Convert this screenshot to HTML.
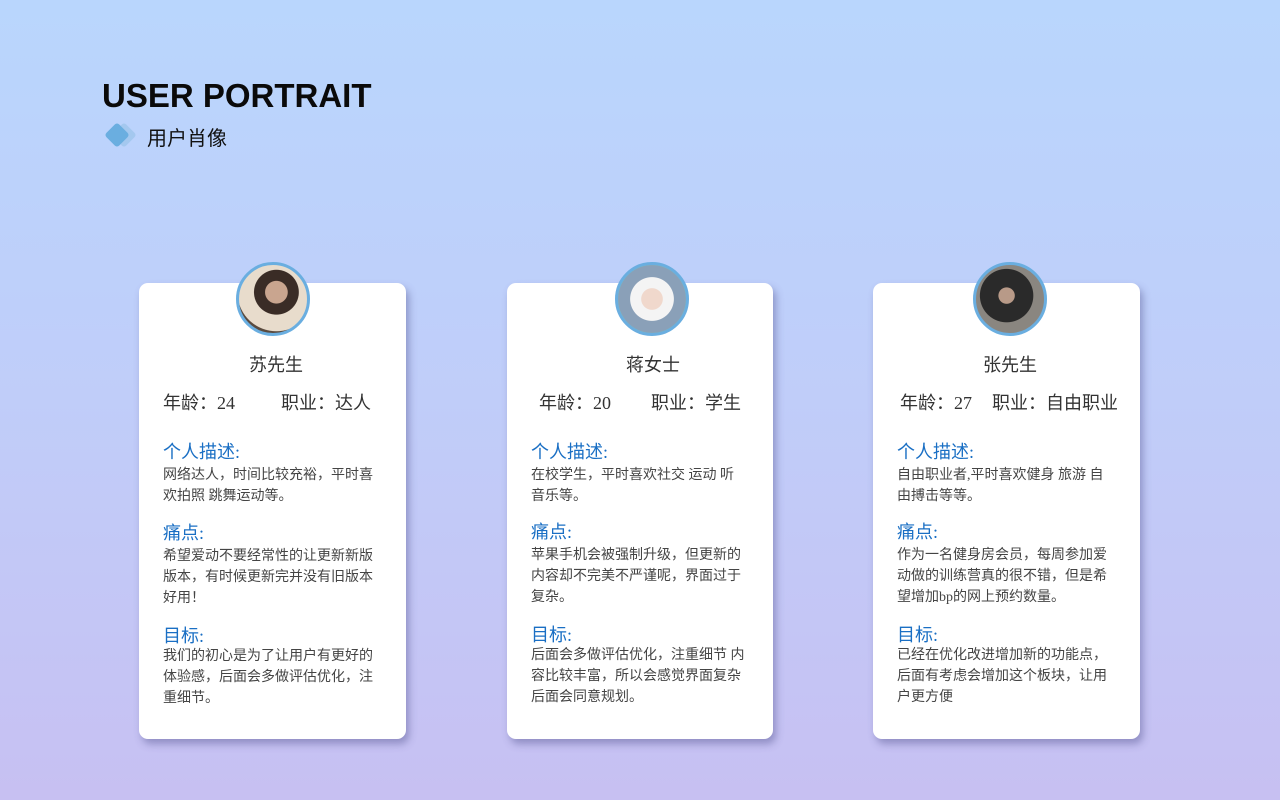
<!DOCTYPE html>
<html><head><meta charset="utf-8"><style>
*{margin:0;padding:0;box-sizing:border-box}
body{width:1280px;height:800px;overflow:hidden;background:linear-gradient(180deg,#b9d6fd 0%,#c0cdf9 50%,#c7c0f2 100%);font-family:"Liberation Serif","Noto Sans CJK SC",sans-serif;position:relative;color:#333}
.t{position:absolute;left:102px;top:77px;font:bold 33px "Liberation Sans",sans-serif;color:#0a0a0a}
.st{position:absolute;left:147px;top:122px;font:20px "Liberation Sans","Noto Sans CJK SC",sans-serif;color:#111}
.d1,.d2{position:absolute;width:18px;height:18px;transform:rotate(45deg);border-radius:3px}
.d1{left:115px;top:126px;background:#a4c8ef}
.d2{left:108px;top:126px;background:#6aaee0}
.card{position:absolute;top:283px;width:267px;height:456px;background:#fff;border-radius:9px;box-shadow:3px 5px 8px rgba(80,80,140,.45)}
.av{position:absolute;top:-21px;width:74px;height:74px;border-radius:50%;border:3px solid #6aaee0;overflow:hidden}
.nm{position:absolute;top:68px;width:100px;text-align:center;font-size:18px;color:#333}
.ag{position:absolute;top:106px;left:24px;right:20px;font-size:18px;color:#333;white-space:nowrap}
.h{position:absolute;left:24px;font-size:18px;color:#1a6fc4}
.p{position:absolute;left:24px;right:10px;font-size:14px;line-height:21px;color:#444;white-space:nowrap}
</style></head><body>
<div class="t">USER PORTRAIT</div>
<div class="d1"></div><div class="d2"></div>
<div class="st">用户肖像</div>

<div class="card" style="left:139px">
<div class="av" style="left:97px;background:radial-gradient(circle at 55% 40%,#c9a58f 0 20%,#3a2c26 21% 40%,#e8dccc 41% 70%,#5a4a3e 71%)"></div>
<div class="nm" style="left:87px">苏先生</div>
<div class="ag">年龄：24<span style="display:inline-block;width:46px"></span>职业：达人</div>
<div class="h" style="top:155px">个人描述:</div>
<div class="p" style="top:182px">网络达人，时间比较充裕，平时喜<br>欢拍照 跳舞运动等。</div>
<div class="h" style="top:236px">痛点:</div>
<div class="p" style="top:263px">希望爱动不要经常性的让更新新版<br>版本，有时候更新完并没有旧版本<br>好用！</div>
<div class="h" style="top:339px">目标:</div>
<div class="p" style="top:363px">我们的初心是为了让用户有更好的<br>体验感，后面会多做评估优化，注<br>重细节。</div>
</div>

<div class="card" style="left:507px;width:266px">
<div class="av" style="left:108px;background:radial-gradient(circle at 50% 50%,#f0d8cc 0 22%,#f4f4f4 23% 45%,#8aa0b8 46% 70%,#7ec8b0 71%)"></div>
<div class="nm" style="left:96px">蒋女士</div>
<div class="ag" style="left:32px">年龄：20<span style="display:inline-block;width:40px"></span>职业：学生</div>
<div class="h" style="top:155px">个人描述:</div>
<div class="p" style="top:182px">在校学生，平时喜欢社交 运动 听<br>音乐等。</div>
<div class="h" style="top:235px">痛点:</div>
<div class="p" style="top:262px">苹果手机会被强制升级，但更新的<br>内容却不完美不严谨呢，界面过于<br>复杂。</div>
<div class="h" style="top:338px">目标:</div>
<div class="p" style="top:362px">后面会多做评估优化，注重细节 内<br>容比较丰富，所以会感觉界面复杂<br>后面会同意规划。</div>
</div>

<div class="card" style="left:873px">
<div class="av" style="left:100px;background:radial-gradient(circle at 45% 45%,#b89a88 0 15%,#2a2a2a 16% 50%,#8a8680 51%)"></div>
<div class="nm" style="left:87px">张先生</div>
<div class="ag" style="left:27px">年龄：27<span style="display:inline-block;width:20px"></span>职业：自由职业</div>
<div class="h" style="top:155px">个人描述:</div>
<div class="p" style="top:182px">自由职业者,平时喜欢健身 旅游 自<br>由搏击等等。</div>
<div class="h" style="top:235px">痛点:</div>
<div class="p" style="top:262px">作为一名健身房会员，每周参加爱<br>动做的训练营真的很不错，但是希<br>望增加bp的网上预约数量。</div>
<div class="h" style="top:338px">目标:</div>
<div class="p" style="top:362px">已经在优化改进增加新的功能点，<br>后面有考虑会增加这个板块，让用<br>户更方便</div>
</div>
</body></html>
